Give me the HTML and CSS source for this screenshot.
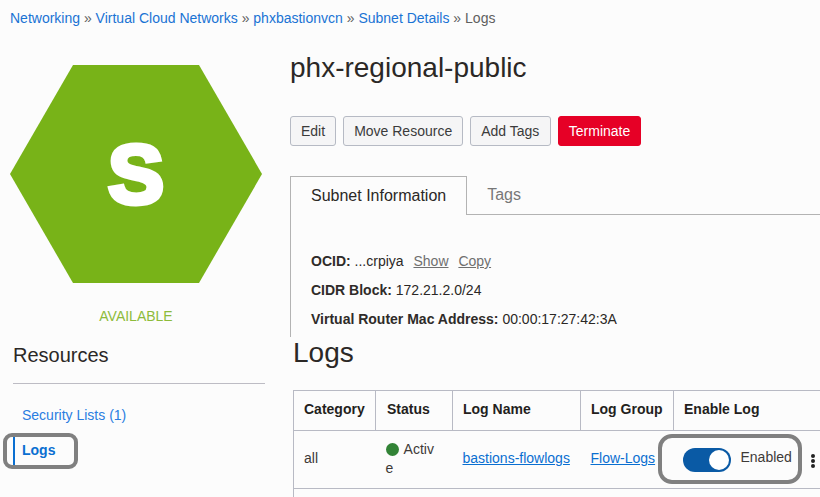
FILE: index.html
```html
<!DOCTYPE html>
<html lang="en">
<head>
<meta charset="utf-8">
<title>Logs</title>
<link rel="stylesheet" href="styles.css">
</head>
<body>
<nav class="crumbs"><a>Networking</a> » <a>Virtual Cloud Networks</a> » <a>phxbastionvcn</a> » <a>Subnet Details</a> » <span>Logs</span></nav>
<section class="top">
  <div class="status-col">
    <div class="hex">S</div>
    <div class="state">AVAILABLE</div>
  </div>
  <div class="detail">
    <h1>phx-regional-public</h1>
    <div class="actions">
      <button class="btn">Edit</button>
      <button class="btn">Move Resource</button>
      <button class="btn tags">Add Tags</button>
      <button class="btn danger">Terminate</button>
    </div>
    <div class="tabs">
      <div class="tab active">Subnet Information</div>
      <div class="tab">Tags</div>
      <div class="tab-rest"></div>
    </div>
    <div class="info">
      <p><b>OCID:</b> ...crpiya <u class="act">Show</u> <u class="act">Copy</u></p>
      <p><b>CIDR Block:</b> 172.21.2.0/24</p>
      <p><b>Virtual Router Mac Address:</b> 00:00:17:27:42:3A</p>
    </div>
  </div>
</section>
<section class="bottom">
  <aside class="resources">
    <h2>Resources</h2>
    <ul>
      <li><a>Security Lists (1)</a></li>
      <li class="current"><a>Logs</a></li>
    </ul>
  </aside>
  <div class="logs">
    <h2>Logs</h2>
    <table>
      <thead>
        <tr><th class="c1">Category</th><th class="c2">Status</th><th class="c3">Log Name</th><th class="c4">Log Group</th><th class="c5">Enable Log</th></tr>
      </thead>
      <tbody>
        <tr>
          <td>all</td>
          <td class="status"><i class="dot"></i> Active</td>
          <td><a class="link">bastions-flowlogs</a></td>
          <td><a class="link">Flow-Logs</a></td>
          <td class="enable-cell">
            <div class="enable">
              <span class="toggle"><i></i></span>
              <span class="en-label">Enabled</span>
              <span class="kebab"><i></i><i></i><i></i></span>
            </div>
          </td>
        </tr>
        <tr class="spacer"><td colspan="5"></td></tr>
      </tbody>
    </table>
  </div>
</section>
<div class="mark mark-logs"></div>
<div class="mark mark-enabled"></div>
</body>
</html>
```
FILE: styles.css
```css
* { box-sizing: border-box; }
html, body { height: 497px; overflow: hidden; }
body {
  margin: 0;
  background: #fcfcfc;
  color: #2b2826;
  font-family: "Liberation Sans", Arial, sans-serif;
  font-size: 13px;
  position: relative;
  width: 820px;
}
.crumbs {
  height: 65px;
  padding: 10px 0 0 10px;
  font-size: 14px;
  line-height: 16px;
  color: #5f5f5f;
}
.crumbs a { color: #1a73d4; }
.top { display: flex; height: 272px; }
.status-col { width: 280px; padding-left: 10px; flex: none; }
.hex {
  width: 252px;
  height: 218px;
  background: #78b318;
  clip-path: polygon(25% 0, 75% 0, 100% 50%, 75% 100%, 25% 100%, 0 50%);
  color: #fff;
  font-weight: 700;
  font-size: 84px;
  line-height: 218px;
  text-align: center;
  -webkit-text-stroke: 5px #fff;
}
.state {
  width: 252px;
  margin-top: 25px;
  text-align: center;
  color: #8dbb3a;
  font-size: 14px;
  line-height: 16px;
}
.detail { flex: 1; padding-left: 10px; margin-top: -65px; padding-top: 53px; min-width: 0; }
.detail h1 {
  margin: 0;
  font-weight: 400;
  font-size: 28px;
  line-height: 30px;
  color: #2b2826;
}
.actions { display: flex; gap: 7px; margin-top: 33px; }
.btn {
  height: 30px;
  padding: 0 10px;
  border: 1px solid #b6bac4;
  border-radius: 3px;
  background: #f5f5f6;
  color: #3b3b3b;
  font: 14px "Liberation Sans", Arial, sans-serif;
}
.btn.tags { padding-right: 11px; }
.danger { background: #e60026; border-color: #e60026; color: #fff; padding: 0 9.5px; }
.tabs { display: flex; height: 39px; margin-top: 30px; }
.tab { padding: 0 20px; line-height: 37px; font-size: 16px; color: #777; border-bottom: 1px solid #b3b3b3; }
.tab.active {
  color: #2b2826;
  border: 1px solid #b3b3b3;
  border-bottom: 0;
  padding: 0 20px;
  line-height: 37px;
}
.tab-rest { flex: 1; border-bottom: 1px solid #b3b3b3; }
.info { height: 122px; border-left: 1px solid #b3b3b3; padding: 38px 0 0 20px; font-size: 14px; }
.info p { margin: 0 0 13px; line-height: 16px; }
.info b { color: #2f2b29; }
.act { color: #6f6f6f; margin-left: 6px; }
.bottom { display: flex; }
.resources { width: 252px; margin-left: 13px; margin-right: 14px; flex: none; padding-top: 6px; }
.resources h2 { margin: 0; font-weight: 400; font-size: 20px; line-height: 24px; padding-bottom: 16px; border-bottom: 1px solid #bdbcc4; }
.resources ul { list-style: none; margin: 20px 0 0; padding: 0; }
.resources li { height: 28px; line-height: 22px; padding-left: 9px; font-size: 14px; }
.resources a { color: #2a7de1; }
.resources li.current { height: 29px; margin-top: 5px; line-height: 27px; border-left: 2px solid #0a6fd1; padding-left: 7px; font-weight: 700; }
.resources .current a { color: #0a6fd1; }
.logs { flex: 1; padding-left: 14px; min-width: 0; }
.logs h2 { margin: 0; font-weight: 400; font-size: 28px; line-height: 32px; }
table {
  margin-top: 21px;
  border-collapse: collapse;
  table-layout: fixed;
  width: 528px;
  font-size: 14px;
  border-top: 1px solid #b8bac4;
  border-left: 1px solid #b8bac4;
}
th { text-align: left; padding: 0 10px 4px; height: 40px; border: 1px solid #b8bac4; border-top: 0; color: #241f1d; }
th.c2 { padding-left: 11px; }
th.c5 { border-right: 0; }
.c1 { width: 82px; }
.c2 { width: 77px; }
.c3 { width: 128px; }
.c4 { width: 93px; }
td { padding: 0 10px 4px; height: 58px; border-bottom: 1px solid #b8bac4; color: #3e3a38; }
td.status { word-break: break-all; line-height: 19px; padding-right: 13px; padding-bottom: 2px; }
td.enable-cell { padding-bottom: 0; }
.spacer td { height: 30px; border-bottom: 0; }
.dot { display: inline-block; width: 13px; height: 13px; border-radius: 50%; background: #328336; vertical-align: -2px; margin-right: 2px; }
.link { color: #0a6fd1; text-decoration: underline; }
.enable { display: flex; align-items: center; margin-left: -1px; }
.toggle { flex: none; width: 48px; height: 24px; border-radius: 12px; background: #0a5aa5; position: relative; }
.toggle i { position: absolute; right: 2px; top: 2px; width: 20px; height: 20px; border-radius: 50%; background: #fff; }
.en-label { margin-left: 10px; position: relative; top: -3px; white-space: nowrap; }
.kebab { display: flex; flex-direction: column; gap: 1px; margin-left: 19px; position: relative; top: 1px; }
.kebab i { width: 4px; height: 4px; background: #222; border-radius: 50%; }
.mark { position: absolute; border: 4px solid #808080; border-radius: 9px; pointer-events: none; }
.mark-logs { left: 3px; top: 433px; width: 75px; height: 36px; }
.mark-enabled { left: 658px; top: 434px; width: 144px; height: 50px; border-radius: 14px; }
```
